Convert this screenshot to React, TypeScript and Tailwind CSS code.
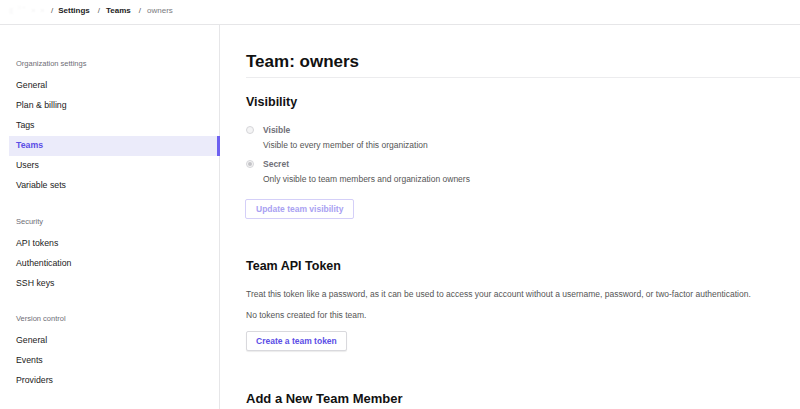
import React from "react";

const font = { fontFamily: '"Liberation Sans", Arial, sans-serif' };

type NavItem = { label: string; active?: boolean };

function NavGroup({ title, items, className = "" }: { title: string; items: NavItem[]; className?: string }) {
  return (
    <div className={className}>
      <div className="h-[10px] pl-[16px] text-[7.5px] leading-[10px] text-[#6e6e76]">{title}</div>
      <ul className="mt-[7px] ml-[9px]">
        {items.map((it) => (
          <li
            key={it.label}
            className={
              "h-[20px] flex items-center pl-[7px] text-[8.75px] " +
              (it.active
                ? "bg-[#ebebfa] text-[#5b4ee6] font-bold border-r-[3px] border-[#6d60f0] -mr-[1px]"
                : "text-[#222]")
            }
          >
            {it.label}
          </li>
        ))}
      </ul>
    </div>
  );
}

function Radio({ checked }: { checked?: boolean }) {
  return (
    <span className="w-[8px] h-[8px] rounded-full border border-[#d6d6d9] bg-[#f4f4f5] flex items-center justify-center shrink-0">
      {checked && <span className="w-[4px] h-[4px] rounded-full bg-[#c4c4c8]" />}
    </span>
  );
}

export default function App() {
  return (
    <div className="w-[800px] h-[409px] overflow-hidden bg-white text-[#333]" style={font}>
      {/* breadcrumb */}
      <header className="h-[25px] border-b border-[#e6e6e8] flex items-start pt-[6px] pl-[10px] text-[8px] leading-[10px]">
        <span className="w-[36px] text-[#b4b4b8] blur-[0.8px] tracking-[2px]">: ˙˙ · ·</span>
        <span className="ml-[5px] text-[#555]">/</span>
        <span className="ml-[5px] font-bold text-[#222]">Settings</span>
        <span className="ml-[8px] text-[#555]">/</span>
        <span className="ml-[6px] font-bold text-[#222]">Teams</span>
        <span className="ml-[8px] text-[#555]">/</span>
        <span className="ml-[6px] text-[#7a7a80]">owners</span>
      </header>

      <div className="flex h-[384px]">
        <aside className="w-[220px] shrink-0 border-r border-[#e6e6e8] pt-[34px]">
          <NavGroup
            title="Organization settings"
            items={[
              { label: "General" },
              { label: "Plan & billing" },
              { label: "Tags" },
              { label: "Teams", active: true },
              { label: "Users" },
              { label: "Variable sets" },
            ]}
          />
          <NavGroup
            className="mt-[21px]"
            title="Security"
            items={[{ label: "API tokens" }, { label: "Authentication" }, { label: "SSH keys" }]}
          />
          <NavGroup
            className="mt-[20px]"
            title="Version control"
            items={[{ label: "General" }, { label: "Events" }, { label: "Providers" }]}
          />
        </aside>

        <main className="flex-1 pl-[26px] pt-[26px]">
          <h1 className="text-[17px] leading-[21px] font-bold text-[#111] pb-[5px] border-b border-[#ececee]">
            Team: owners
          </h1>

          <h2 className="mt-[16px] text-[12.5px] leading-[16px] font-bold text-[#111]">Visibility</h2>

          <div className="mt-[14px] flex items-center h-[12px]">
            <Radio />
            <span className="ml-[9px] text-[8.5px] font-bold text-[#707078]">Visible</span>
          </div>
          <p className="mt-[3px] ml-[17px] text-[8.5px] leading-[12px] text-[#555]">
            Visible to every member of this organization
          </p>
          <div className="mt-[7px] flex items-center h-[12px]">
            <Radio checked />
            <span className="ml-[9px] text-[8.5px] font-bold text-[#707078]">Secret</span>
          </div>
          <p className="mt-[3px] ml-[17px] text-[8.5px] leading-[12px] text-[#555]">
            Only visible to team members and organization owners
          </p>

          <button className="mt-[14px] -ml-[1px] h-[20px] px-[10px] rounded-[2px] border border-[#d4cff8] text-[8.5px] font-bold text-[#a9a1f2] bg-white">
            Update team visibility
          </button>

          <h2 className="mt-[39px] text-[12.5px] leading-[16px] font-bold text-[#111]">Team API Token</h2>
          <p className="mt-[14px] text-[8.5px] leading-[12px] text-[#555]">
            Treat this token like a password, as it can be used to access your account without a username, password, or two-factor authentication.
          </p>
          <p className="mt-[9px] text-[8.5px] leading-[12px] text-[#555]">No tokens created for this team.</p>

          <button className="mt-[10px] h-[20px] px-[9px] rounded-[2px] border border-[#d9d9dd] shadow-[0_1px_1px_rgba(0,0,0,0.08)] text-[8.5px] font-bold text-[#5b4ee6] bg-white">
            Create a team token
          </button>

          <h2 className="mt-[40px] text-[13px] leading-[16px] font-bold text-[#111]">Add a New Team Member</h2>
        </main>
      </div>
    </div>
  );
}
